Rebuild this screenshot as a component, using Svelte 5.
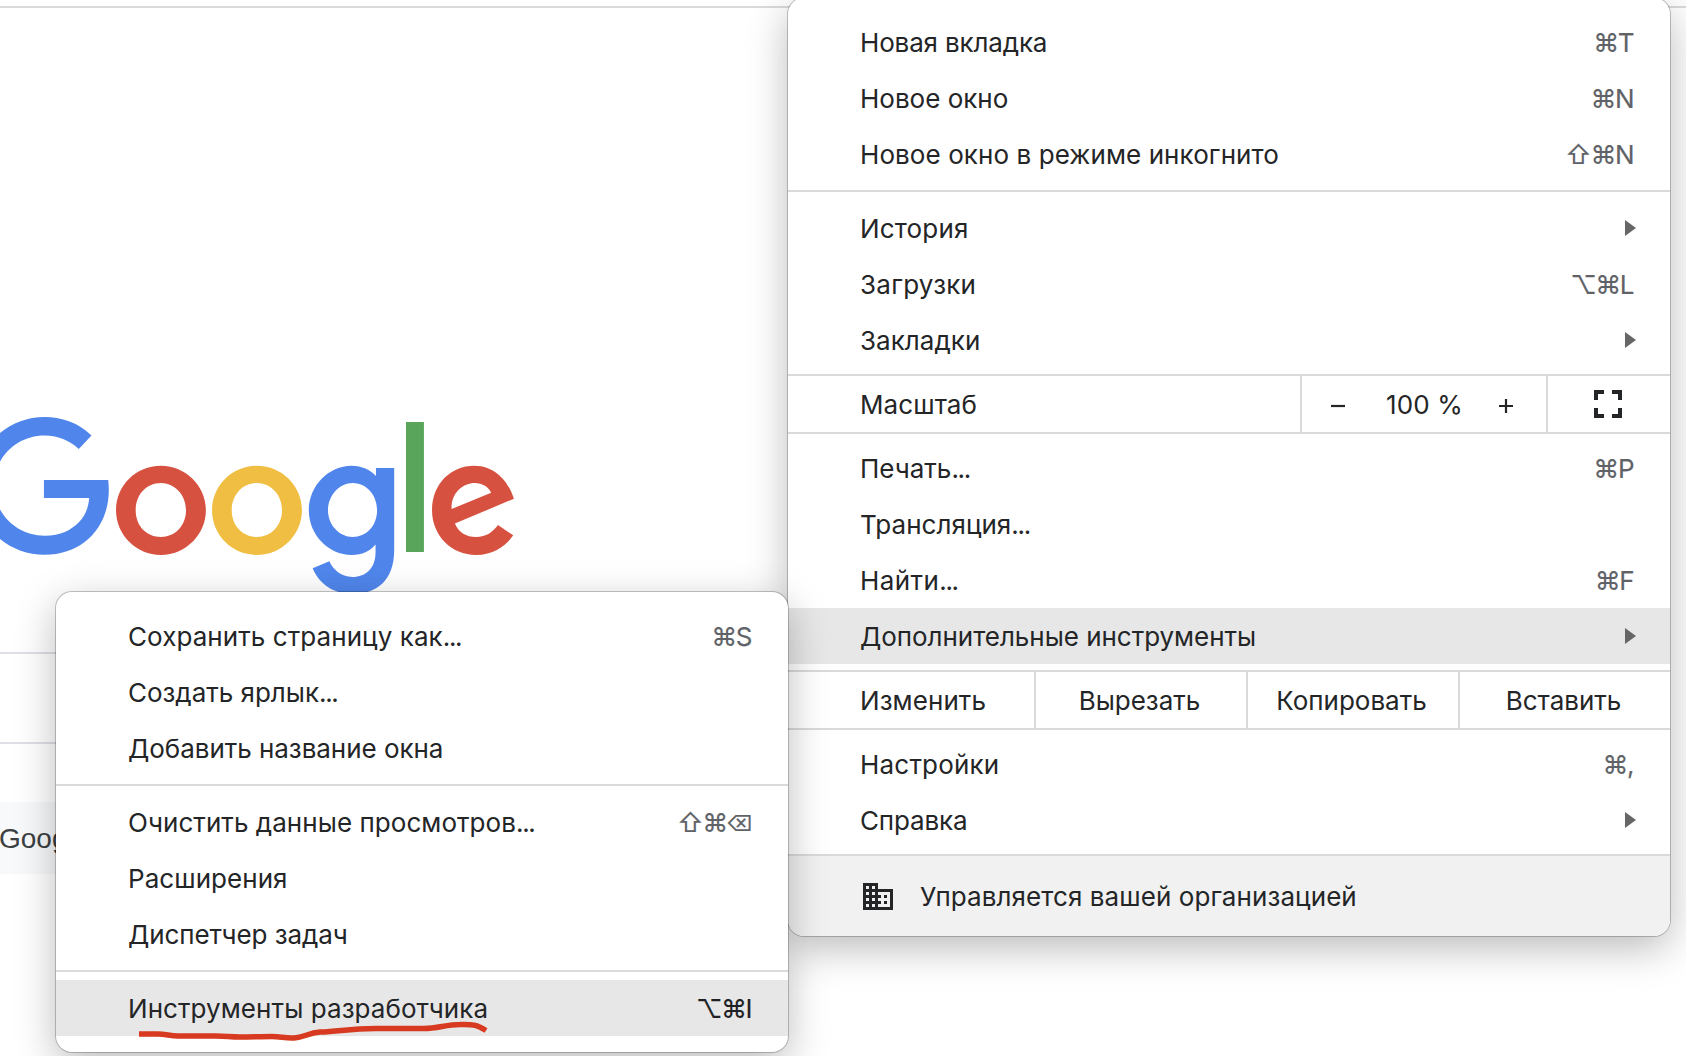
<script>
  // `track` is the letter spacing of a label, in pixels.
  const mainTop = [
    { label: 'Новая вкладка', keys: '⌘T', track: -0.15 },
    { label: 'Новое окно', keys: '⌘N', track: 0 },
    { label: 'Новое окно в режиме инкогнито', keys: '⇧⌘N', track: 0.08 }
  ];
  const mainLibrary = [
    { label: 'История', arrow: true, track: 0.15 },
    { label: 'Загрузки', keys: '⌥⌘L', track: 0.25 },
    { label: 'Закладки', arrow: true, track: 0.03 }
  ];
  const mainActions = [
    { label: 'Печать', dots: true, keys: '⌘P', track: 0 },
    { label: 'Трансляция', dots: true, track: 0.03 },
    { label: 'Найти', dots: true, keys: '⌘F', track: 0.4 },
    { label: 'Дополнительные инструменты', arrow: true, active: true, track: -0.04 }
  ];
  const mainSettings = [
    { label: 'Настройки', keys: '⌘,', track: 0.2 },
    { label: 'Справка', arrow: true, track: -0.15 }
  ];
  const toolsPage = [
    { label: 'Сохранить страницу как', dots: true, keys: '⌘S', track: 0.07 },
    { label: 'Создать ярлык', dots: true, track: -0.02 },
    { label: 'Добавить название окна', track: -0.04 }
  ];
  const toolsBrowser = [
    { label: 'Очистить данные просмотров', dots: true, keys: '⇧⌘', erase: true, track: 0.05 },
    { label: 'Расширения', track: 0.05 },
    { label: 'Диспетчер задач', track: -0.08 }
  ];
  const toolsDev = [
    { label: 'Инструменты разработчика', keys: '⌥⌘I', active: true, dark: true, track: 0.07 }
  ];
</script>

{#snippet rows(items)}
  {#each items as item}
    <div class="row" class:active={item.active}>
      <span class="label" style:letter-spacing="{item.track}px">{item.label}{#if item.dots}<span class="dots">...</span>{/if}</span>
      {#if item.keys}
        <span class="keys" class:dark={item.dark}>{item.keys}{#if item.erase}<span class="erase">⌫</span>{/if}</span>
      {/if}
      {#if item.arrow}
        <svg class="arrow" viewBox="0 0 11 16"><path d="M0 0L11 8L0 16Z" /></svg>
      {/if}
    </div>
  {/each}
{/snippet}

<main class="page">
  <div class="toolbar-edge"></div>
  <svg class="logo" viewBox="0 0 522.6 200" preserveAspectRatio="none" aria-label="Google">
    <path fill="#5086ec" d="M90.2 35.5C78 23.5 62 17 44 17C6 17-25 48-25 86C-25 124 6 154.8 44 154.8C82 154.8 107.3 127 107.3 90C107.3 86 107 83 106.7 80H43.3V98H88C87 108 84 116 78 122C70 130 60 135.8 44 135.8C16 135.8-6 113-6 86C-6 58 16 35.6 44 35.6C58 35.6 69 41 77.7 49Z" />
    <path fill="#d75140" fill-rule="evenodd" d="M158.7 65.8C183 65.8 203 86 203 110.3S183 155 158.7 155S114.4 135 114.4 110.3S134 65.8 158.7 65.8ZM158.7 83C145 83 133.8 94 133.8 110.3S145 137 158.7 137S183.4 126 183.4 110.3S172 83 158.7 83Z" />
    <path fill="#f0be42" fill-rule="evenodd" d="M253.4 65.8C278 65.8 297.7 86 297.7 110.3S278 155 253.4 155S209.1 135 209.1 110.3S229 65.8 253.4 65.8ZM253.4 83C240 83 228.5 94 228.5 110.3S240 137 253.4 137S278.1 126 278.1 110.3S267 83 253.4 83Z" />
    <path fill="#5086ec" fill-rule="evenodd" d="M388.7 68H370.7V76C365 70 357 65.8 346.7 65.8C324 65.8 304.5 86 304.5 110.3C304.5 135 324 155 346.7 155C357 155 365 151 370.3 144.5V152C370.3 168 361 177 347.5 177C336 177 328 169 324.8 161.3L308.3 168.3C313 180 325 194 347.5 194C371 194 388.7 181 388.7 150ZM347.8 83C361 83 371.8 94.5 371.8 110.3S361 137 347.8 137S323.4 125 323.4 110.3S334.5 83 347.8 83Z" />
    <path fill="#59a55c" d="M400.3 22H418V152H400.3Z" />
    <path fill="#d75140" fill-rule="evenodd" d="M506.8 98.7L505 94C501 84 490 65.8 467.5 65.8C445 65.8 426 83.5 426 110.3C426 135.5 445 155 469.5 155C489 155 501 143 506 135.3L491 125C486 132 479.5 137 469.5 137C459.5 137 452.5 132.5 448.5 123.5ZM445.3 109L484.3 92.7C482 87.3 476 83 468 83C457 83 444.7 92.5 445.3 109Z" />
  </svg>
  <div class="search"></div>
  <div class="chip">Google</div>
</main>

<section class="menu main-menu">
  {@render rows(mainTop)}
  <hr />
  {@render rows(mainLibrary)}
  <div class="split">
    <span class="label">Масштаб</span>
    <div class="cell stepper">
      <svg viewBox="0 0 14 14"><path d="M0 7H14" /></svg>
      <span class="percent">100 %</span>
      <svg viewBox="0 0 14 14"><path d="M0 7H14M7 0V14" /></svg>
    </div>
    <div class="cell full">
      <svg viewBox="0 0 28 28"><path d="M10 2H2V10M18 2H26V10M2 18V26H10M26 18V26H18" /></svg>
    </div>
  </div>
  {@render rows(mainActions)}
  <div class="split">
    <span class="label">Изменить</span>
    <div class="cell">Вырезать</div>
    <div class="cell">Копировать</div>
    <div class="cell">Вставить</div>
  </div>
  {@render rows(mainSettings)}
  <footer>
    <svg viewBox="2 3 20 18"><path d="M12 7V3H2v18h20V7H12zM6 19H4v-2h2v2zm0-4H4v-2h2v2zm0-4H4V9h2v2zm0-4H4V5h2v2zm4 12H8v-2h2v2zm0-4H8v-2h2v2zm0-4H8V9h2v2zm0-4H8V5h2v2zm10 12h-8v-2h2v-2h-2v-2h2v-2h-2V9h8v10zm-2-8h-2v2h2v-2zm0 4h-2v2h2v-2z" /></svg>
    <span>Управляется вашей организацией</span>
  </footer>
</section>

<section class="menu tools-menu">
  {@render rows(toolsPage)}
  <hr />
  {@render rows(toolsBrowser)}
  <hr />
  {@render rows(toolsDev)}
  <svg class="underline" viewBox="0 0 360 24"><path d="M3 10H22C30 10 34 12 42 12H80C90 12 94 13 104 13C116 13 124 12.500 136 12.500C144 12.500 150 14.500 158 14C168 13.500 172 9 184 8C204 7.500 212 4.500 240 4.500H288C302 4.500 310 0.500 324 0.500C338 0 342 1.500 350 6.500" /></svg>
</section>

<style>
  :global(body) {
    background: #fff;
    overflow: hidden;
  }
  .page {
    display: flex;
    flex-direction: column;
    height: 1056px;
    overflow: hidden;
  }
  .toolbar-edge {
    height: 2px;
    margin-top: 6px;
    background: #dadada;
    flex: none;
  }
  .logo {
    width: 530px;
    height: 200px;
    margin-top: 392px;
    flex: none;
  }
  .search {
    width: 500px;
    height: 88px;
    margin-top: 52px;
    border-top: 2px solid #dfe0e6;
    border-bottom: 2px solid #dfe0e6;
    flex: none;
  }
  .chip {
    width: 140px;
    height: 72px;
    margin-top: 58px;
    background: #f8f9fa;
    color: #3c4043;
    font: 28px/73px 'Liberation Sans', Arial, sans-serif;
    text-indent: -1px;
    flex: none;
  }
  .menu {
    position: absolute;
    box-sizing: border-box;
    padding-top: 16px;
    border-radius: 16px;
    background: #fff;
    color: #242527;
    font: 26px/56px Inter, sans-serif;
    letter-spacing: 0.08px;
    white-space: nowrap;
    box-shadow: 0 0 0 1px rgba(0, 0, 0, 0.22), 0 12px 40px rgba(0, 0, 0, 0.27);
  }
  .main-menu {
    left: 788px;
    top: -2px;
    width: 882px;
    height: 938px;
  }
  .tools-menu {
    left: 56px;
    top: 592px;
    width: 732px;
    height: 460px;
  }
  .row {
    display: flex;
    justify-content: space-between;
    align-items: center;
    height: 56px;
    padding: 0 36px 0 72px;
  }
  .row .label,
  .keys {
    padding-top: 2px;
  }
  .dots {
    letter-spacing: -1.3px;
  }
  .active {
    background: #e7e7e7;
  }
  .keys {
    margin-right: 1px;
    color: #5f6368;
    letter-spacing: -1.5px;
    -webkit-text-stroke: 0.15px currentColor;
  }
  .keys.dark {
    color: #202124;
  }
  .erase {
    margin-left: -1px;
    font-size: 22px;
    line-height: 1;
    position: relative;
    top: -1px;
  }
  .arrow {
    width: 11px;
    height: 16px;
    margin-right: -2px;
    fill: #666;
  }
  hr {
    height: 2px;
    margin: 8px 0;
    border: 0;
    background: #dadada;
  }
  .split {
    display: flex;
    height: 56px;
    margin: 6px 0;
    border-top: 2px solid #dadada;
    border-bottom: 2px solid #dadada;
    line-height: 58px;
  }
  .split .label {
    flex: 1;
    padding-left: 72px;
  }
  .cell {
    box-sizing: border-box;
    width: 212px;
    padding-right: 3px;
    border-left: 2px solid #dadada;
    letter-spacing: 0;
    text-align: center;
  }
  .stepper {
    display: flex;
    width: 246px;
    align-items: center;
    justify-content: space-between;
    padding: 0 33px 0 29px;
  }
  .stepper svg {
    width: 14px;
    height: 14px;
    margin-top: 4px;
    stroke: #242527;
    stroke-width: 2.2;
  }
  .percent {
    margin-left: 5px;
    padding-top: 2px;
    letter-spacing: 0.15px;
  }
  .full {
    display: flex;
    width: 124px;
    align-items: center;
    justify-content: center;
    padding-right: 2px;
  }
  .full svg {
    width: 28px;
    height: 28px;
    fill: none;
    stroke: #242527;
    stroke-width: 4;
  }
  footer {
    display: flex;
    align-items: center;
    gap: 27px;
    height: 80px;
    margin-top: 6px;
    padding-left: 75px;
    border-top: 2px solid #dadada;
    border-radius: 0 0 16px 16px;
    background: #f1f1f1;
  }
  footer svg {
    width: 30px;
    height: 27px;
    fill: #242527;
  }
  footer span {
    padding-top: 2px;
  }
  .underline {
    position: absolute;
    left: 80px;
    top: 432px;
    width: 360px;
    height: 24px;
    overflow: visible;
    fill: none;
    stroke: #d73a20;
    stroke-width: 5.5;
  }
</style>
